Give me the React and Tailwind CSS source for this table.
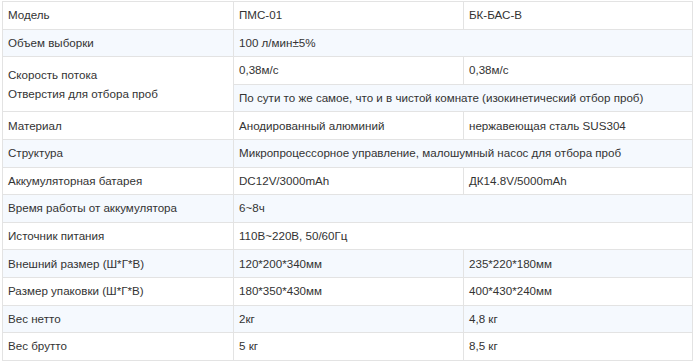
import React from "react";

const rows = [
  { a: "Модель", b: "ПМС-01", c: "БК-БАС-В" },
  { a: "Объем выборки", b: "100 л/мин±5%", span: true },
  { special: true },
  { a: "Материал", b: "Анодированный алюминий", c: "нержавеющая сталь SUS304" },
  { a: "Структура", b: "Микропроцессорное управление, малошумный насос для отбора проб", span: true },
  { a: "Аккумуляторная батарея", b: "DC12V/3000mAh", c: "ДК14.8V/5000mAh" },
  { a: "Время работы от аккумулятора", b: "6~8ч", span: true },
  { a: "Источник питания", b: "110В~220В, 50/60Гц", span: true },
  { a: "Внешний размер (Ш*Г*В)", b: "120*200*340мм", c: "235*220*180мм" },
  { a: "Размер упаковки (Ш*Г*В)", b: "180*350*430мм", c: "400*430*240мм" },
  { a: "Вес нетто", b: "2кг", c: "4,8 кг" },
  { a: "Вес брутто", b: "5 кг", c: "8,5 кг" },
];

const td = "border border-[#e3e3e3] px-[5px] py-0 align-middle text-left font-normal";

export default function App() {
  let stripe = 0;
  const body = [];
  rows.forEach((r, i) => {
    if (r.special) {
      const bg1 = stripe % 2 === 1 ? "bg-[#f5f9fe]" : "bg-white";
      stripe++;
      const bg2 = stripe % 2 === 1 ? "bg-[#f5f9fe]" : "bg-white";
      stripe++;
      body.push(
        <tr key={i + "a"} className={"h-[27.6px] " + bg1}>
          <td rowSpan={2} className={td + " leading-[19px] bg-white"}>
            <div>Скорость потока</div>
            <div>Отверстия для отбора проб</div>
          </td>
          <td className={td}>0,38м/с</td>
          <td className={td}>0,38м/с</td>
        </tr>
      );
      body.push(
        <tr key={i + "b"} className={"h-[27.6px] " + bg2}>
          <td colSpan={2} className={td}>
            По сути то же самое, что и в чистой комнате (изокинетический отбор проб)
          </td>
        </tr>
      );
      return;
    }
    const bg = stripe % 2 === 1 ? "bg-[#f5f9fe]" : "bg-white";
    stripe++;
    body.push(
      <tr key={i} className={"h-[27.6px] " + bg}>
        <td className={td}>{r.a}</td>
        {r.span ? (
          <td colSpan={2} className={td}>{r.b}</td>
        ) : (
          <>
            <td className={td}>{r.b}</td>
            <td className={td}>{r.c}</td>
          </>
        )}
      </tr>
    );
  });

  return (
    <div className="w-[693px] h-[362px] bg-white pl-[2px] pt-px overflow-hidden">
      <table
        className="table-fixed border-collapse w-[691px] text-[11.6px] leading-[20px] text-[#333]"
        style={{ fontFamily: '"Liberation Sans", Arial, sans-serif' }}
      >
        <colgroup>
          <col className="w-[231px]" />
          <col className="w-[230px]" />
          <col />
        </colgroup>
        <tbody>{body}</tbody>
      </table>
    </div>
  );
}
